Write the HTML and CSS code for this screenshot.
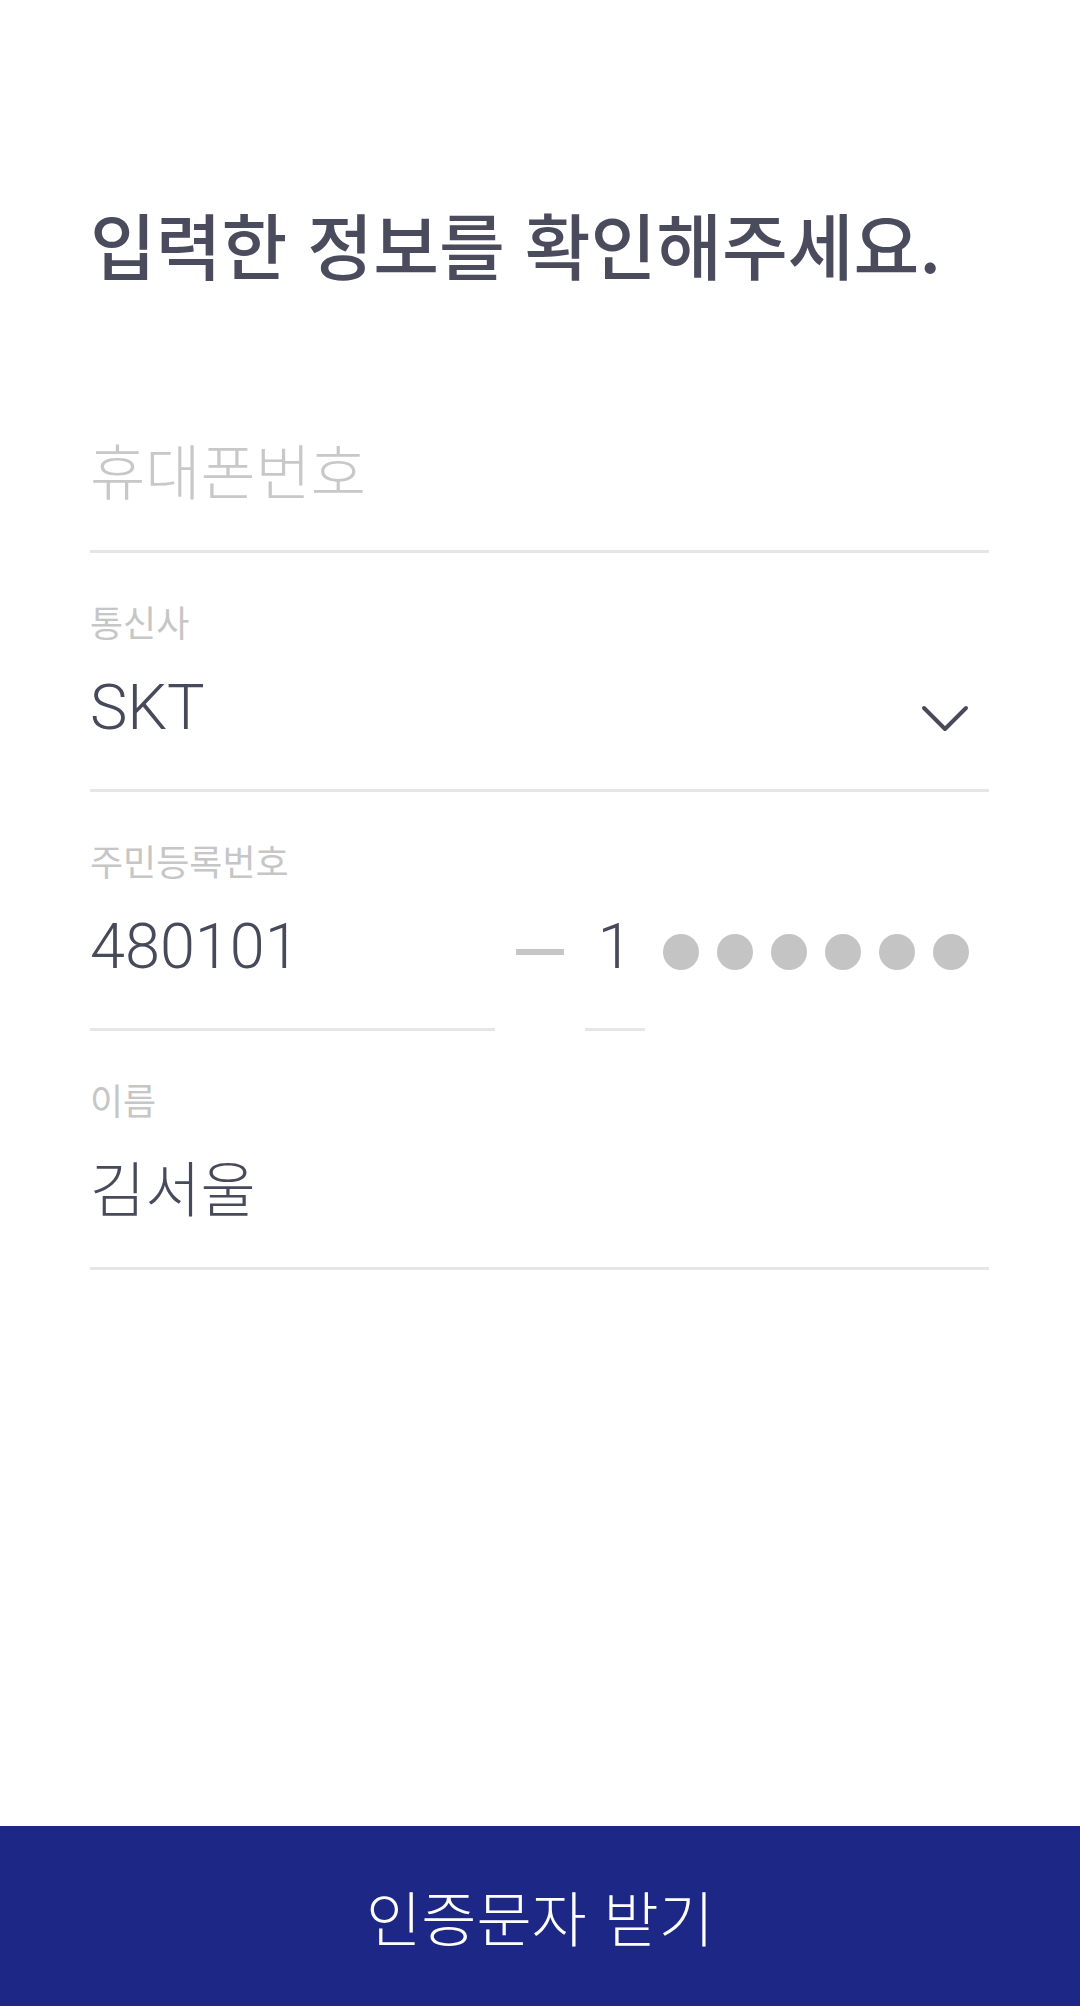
FILE: index.html
```html
<!DOCTYPE html>
<html lang="ko">
<head>
<meta charset="utf-8">
<title>입력한 정보를 확인해주세요.</title>
<link rel="stylesheet" href="styles.css">
</head>
<body>
<div class="page">
  <main class="form">
    <h1 class="title">입력한 정보를 확인해주세요.</h1>

    <div class="field field-phone">
      <div class="row"><span class="placeholder ko">휴대폰번호</span></div>
    </div>

    <div class="field">
      <div class="label">통신사</div>
      <div class="row row-select">
        <span class="value latin">SKT</span>
        <svg class="chevron" width="50" height="29" viewBox="0 0 50 29" aria-hidden="true">
          <polyline points="4,4 25,25 46,4" fill="none" stroke="#474a5a" stroke-width="4" stroke-linecap="round" stroke-linejoin="round"/>
        </svg>
      </div>
    </div>

    <div class="field field-rrn">
      <div class="label">주민등록번호</div>
      <div class="row row-rrn">
        <div class="seg seg-front"><span class="value latin">480101</span></div>
        <div class="dash-wrap"><span class="dash"></span></div>
        <div class="seg seg-back"><span class="value latin">1</span></div>
        <div class="dots">
          <span class="dot"></span><span class="dot"></span><span class="dot"></span>
          <span class="dot"></span><span class="dot"></span><span class="dot"></span>
        </div>
      </div>
    </div>

    <div class="field">
      <div class="label">이름</div>
      <div class="row"><span class="value ko">김서울</span></div>
    </div>
  </main>

  <button class="submit" type="button">인증문자 받기</button>
</div>
</body>
</html>
```

FILE: styles.css
```css
* { box-sizing: border-box; }

html, body {
  margin: 0;
  padding: 0;
  background: #ffffff;
}

body {
  font-family: "Noto Sans CJK KR", "Noto Sans", sans-serif;
  color: #474a5a;
}

.page {
  display: flex;
  flex-direction: column;
  width: 1080px;
  min-height: 2006px;
}

.form {
  padding: 0 91px 0 90px;
}

.title {
  margin: 206px 0 154px;
  font-size: 71.5px;
  line-height: 74px;
  font-weight: 500;
  color: #4a4c5d;
  letter-spacing: 0;
  white-space: nowrap;
}

.field {
  padding: 48px 0 46px;
  border-bottom: 3px solid #e6e6e6;
}

.field-phone {
  padding-top: 0;
}

.label {
  height: 40px;
  margin-bottom: 32px;
  font-size: 36px;
  line-height: 40px;
  font-weight: 400;
  color: #c6c6c6;
}

.row {
  display: flex;
  height: 70px;
  align-items: flex-start;
}

.ko {
  font-family: "Noto Sans CJK KR", "Noto Sans", sans-serif;
  font-size: 60px;
  line-height: 70px;
  font-weight: 300;
}

.latin {
  font-family: Roboto, "Liberation Sans", sans-serif;
  font-size: 63px;
  line-height: 70px;
  font-weight: 300;
}

.placeholder {
  color: #c8c8c8;
}

.value {
  color: #474a5a;
}

.row-select {
  justify-content: space-between;
}

.chevron {
  display: block;
  margin: 31px 19px 0 0;
}

/* resident registration number */
.field-rrn {
  padding-bottom: 0;
  border-bottom: none;
}

.row-rrn {
  height: auto;
}

.seg {
  height: 119px;
  padding-bottom: 46px;
  border-bottom: 3px solid #e6e6e6;
}

.seg-front {
  width: 405px;
}

.seg-back {
  width: 60px;
  text-align: center;
}

.dash-wrap {
  display: flex;
  width: 90px;
  height: 70px;
  padding-top: 10px;
  align-items: center;
  justify-content: center;
}

.dash {
  display: block;
  width: 48px;
  height: 6px;
  background: #c6c6c6;
}

.dots {
  display: flex;
  height: 70px;
  padding-top: 10px;
  margin-left: 18px;
  align-items: center;
  gap: 18px;
}

.dot {
  display: block;
  width: 36px;
  height: 36px;
  border-radius: 50%;
  background: #c4c4c4;
}

.submit {
  margin-top: auto;
  display: block;
  width: 100%;
  height: 180px;
  border: none;
  padding: 0;
  background: #1c2786;
  color: #ffffff;
  font-family: "Noto Sans CJK KR", "Noto Sans", sans-serif;
  font-size: 60px;
  font-weight: 300;
  line-height: 180px;
  text-align: center;
}
```
